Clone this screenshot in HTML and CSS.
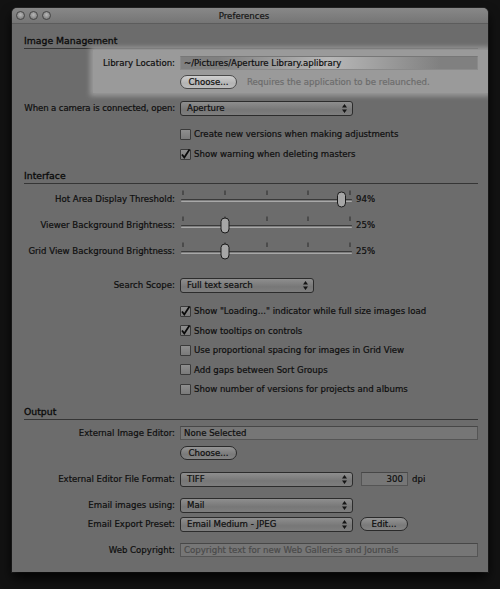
FILE: index.html
```html
<!DOCTYPE html>
<html>
<head>
<meta charset="utf-8">
<title>Preferences</title>
<link rel="stylesheet" href="styles.css">
</head>
<body>
<div class="window">
  <div class="titlebar">
    <div class="lights"><span class="light"></span><span class="light"></span><span class="light"></span></div>
    <div class="title">Preferences</div>
    <div></div>
  </div>
  <div class="content">
    <div class="section-head">Image Management</div>
    <div class="highlight">
      <div class="row r-lib"><span class="lbl">Library Location:</span><div class="field light">~/Pictures/Aperture Library.aplibrary</div></div>
      <div class="row r-choose"><span class="lbl"></span><button class="btn choose">Choose...</button><span class="note">Requires the application to be relaunched.</span></div>
    </div>
    <div class="row r-camera"><span class="lbl tight">When a camera is connected, open:</span>
      <div class="popup"><span>Aperture</span><svg class="arrows" width="5" height="9" viewBox="0 0 5 9"><path d="M0 3.5L2.5 0L5 3.5Z M0 5.5L2.5 9L5 5.5Z"/></svg></div>
    </div>
    <div class="row indent r-cb1"><span class="cb"></span><span>Create new versions when making adjustments</span></div>
    <div class="row indent r-cb2"><span class="cb"><svg width="11" height="11" viewBox="0 0 11 11"><path d="M2 5.5L4.3 8.5L9.5 0.5" fill="none" stroke="#0a0a0a" stroke-width="1.8"/></svg></span><span>Show warning when deleting masters</span></div>

    <div class="section-head h-interface">Interface</div>
    <div class="row slider-row s-first"><span class="lbl">Hot Area Display Threshold:</span>
      <svg class="slider" width="174" height="26" viewBox="0 0 174 26">
        <g class="ticks"><rect x="2.5" y="4.5" width="1" height="4.5"/><rect x="44.5" y="4.5" width="1" height="4.5"/><rect x="86.5" y="4.5" width="1" height="4.5"/><rect x="127.5" y="4.5" width="1" height="4.5"/><rect x="169.5" y="4.5" width="1" height="4.5"/></g>
        <rect class="track-dark" x="1" y="13" width="171" height="1.5" rx="0.75"/><rect class="track-light" x="1" y="14.5" width="171" height="1.5" rx="0.75"/>
        <path class="knob" d="M157.5 9.5 Q157.5 6 161.5 6 Q165.5 6 165.5 9.5 L165.5 17 Q165.5 21 161.5 21 Q157.5 21 157.5 17 Z"/>
      </svg><span class="val">94%</span>
    </div>
    <div class="row slider-row"><span class="lbl">Viewer Background Brightness:</span>
      <svg class="slider" width="174" height="26" viewBox="0 0 174 26">
        <g class="ticks"><rect x="2.5" y="4.5" width="1" height="4.5"/><rect x="44.5" y="4.5" width="1" height="4.5"/><rect x="86.5" y="4.5" width="1" height="4.5"/><rect x="127.5" y="4.5" width="1" height="4.5"/><rect x="169.5" y="4.5" width="1" height="4.5"/></g>
        <rect class="track-dark" x="1" y="13" width="171" height="1.5" rx="0.75"/><rect class="track-light" x="1" y="14.5" width="171" height="1.5" rx="0.75"/>
        <path class="knob" d="M41 9.5 Q41 6 45 6 Q49 6 49 9.5 L49 17 Q49 21 45 21 Q41 21 41 17 Z"/>
      </svg><span class="val">25%</span>
    </div>
    <div class="row slider-row"><span class="lbl">Grid View Background Brightness:</span>
      <svg class="slider" width="174" height="26" viewBox="0 0 174 26">
        <g class="ticks"><rect x="2.5" y="4.5" width="1" height="4.5"/><rect x="44.5" y="4.5" width="1" height="4.5"/><rect x="86.5" y="4.5" width="1" height="4.5"/><rect x="127.5" y="4.5" width="1" height="4.5"/><rect x="169.5" y="4.5" width="1" height="4.5"/></g>
        <rect class="track-dark" x="1" y="13" width="171" height="1.5" rx="0.75"/><rect class="track-light" x="1" y="14.5" width="171" height="1.5" rx="0.75"/>
        <path class="knob" d="M41 9.5 Q41 6 45 6 Q49 6 49 9.5 L49 17 Q49 21 45 21 Q41 21 41 17 Z"/>
      </svg><span class="val">25%</span>
    </div>
    <div class="row r-scope"><span class="lbl">Search Scope:</span>
      <div class="popup narrow"><span>Full text search</span><svg class="arrows" width="5" height="9" viewBox="0 0 5 9"><path d="M0 3.5L2.5 0L5 3.5Z M0 5.5L2.5 9L5 5.5Z"/></svg></div>
    </div>
    <div class="cb-list">
      <div class="row indent cbrow"><span class="cb"><svg width="11" height="11" viewBox="0 0 11 11"><path d="M2 5.5L4.3 8.5L9.5 0.5" fill="none" stroke="#0a0a0a" stroke-width="1.8"/></svg></span><span>Show "Loading..." indicator while full size images load</span></div>
      <div class="row indent cbrow"><span class="cb"><svg width="11" height="11" viewBox="0 0 11 11"><path d="M2 5.5L4.3 8.5L9.5 0.5" fill="none" stroke="#0a0a0a" stroke-width="1.8"/></svg></span><span>Show tooltips on controls</span></div>
      <div class="row indent cbrow"><span class="cb"></span><span>Use proportional spacing for images in Grid View</span></div>
      <div class="row indent cbrow"><span class="cb"></span><span>Add gaps between Sort Groups</span></div>
      <div class="row indent cbrow"><span class="cb"></span><span>Show number of versions for projects and albums</span></div>
    </div>

    <div class="section-head h-output">Output</div>
    <div class="row r-ext"><span class="lbl">External Image Editor:</span><div class="field">None Selected</div></div>
    <div class="row r-choose2"><span class="lbl"></span><button class="btn choose">Choose...</button></div>
    <div class="row r-format"><span class="lbl">External Editor File Format:</span>
      <div class="popup"><span>TIFF</span><svg class="arrows" width="5" height="9" viewBox="0 0 5 9"><path d="M0 3.5L2.5 0L5 3.5Z M0 5.5L2.5 9L5 5.5Z"/></svg></div>
      <div class="field dpi">300</div><span class="unit">dpi</span>
    </div>
    <div class="row r-mail"><span class="lbl">Email images using:</span>
      <div class="popup"><span>Mail</span><svg class="arrows" width="5" height="9" viewBox="0 0 5 9"><path d="M0 3.5L2.5 0L5 3.5Z M0 5.5L2.5 9L5 5.5Z"/></svg></div>
    </div>
    <div class="row r-preset"><span class="lbl">Email Export Preset:</span>
      <div class="popup"><span>Email Medium - JPEG</span><svg class="arrows" width="5" height="9" viewBox="0 0 5 9"><path d="M0 3.5L2.5 0L5 3.5Z M0 5.5L2.5 9L5 5.5Z"/></svg></div>
      <button class="btn edit">Edit...</button>
    </div>
    <div class="row r-web"><span class="lbl">Web Copyright:</span><div class="field placeholder">Copyright text for new Web Galleries and Journals</div></div>
  </div>
</div>
</body>
</html>
```

FILE: styles.css
```css
* { box-sizing: border-box; }
html, body { margin: 0; padding: 0; }
body {
  background: #121212;
  width: 500px;
  height: 589px;
  overflow: hidden;
  font-family: "DejaVu Sans", sans-serif;
  font-size: 8.6px;
  color: #0e0e0e;
  -webkit-text-stroke: 0.2px currentColor;
}
.window {
  margin: 8px 0 0 12px;
  width: 476px;
  height: 564px;
  background: #6c6c6c;
  border-radius: 5px 5px 0 0;
  box-shadow: 0 6px 12px rgba(0,0,0,0.85), 0 0 0 1px #262626;
  overflow: hidden;
  display: flex;
  flex-direction: column;
}
.titlebar {
  height: 16px;
  flex: none;
  background: linear-gradient(#888, #757575);
  border-bottom: 1px solid #5c5c5c;
  display: grid;
  grid-template-columns: 1fr auto 1fr;
  align-items: center;
}
.lights { display: flex; gap: 4px; padding-left: 4px; }
.light {
  width: 9px; height: 9px; border-radius: 50%;
  border: 1px solid #454545;
  background: radial-gradient(circle at 50% 40%, #b8b8b8, #808080 75%);
}
.title { margin-right: 12px; color: #151515; }
.content {
  padding: 10px 10px 0 12px;
  display: flex;
  flex-direction: column;
}
.section-head {
  height: 15px;
  flex: none;
  border-bottom: 1px solid #353535;
  font-size: 9.3px;
  line-height: 14px;
  color: #0a0a0a;
  -webkit-text-stroke: 0.3px currentColor;
}
.row { display: flex; align-items: center; flex: none; white-space: nowrap; }
.lbl {
  width: 151px; flex: none; margin-right: 5px; white-space: nowrap;
  text-align: right;
}
.lbl.tight { letter-spacing: -0.13px; }
.indent { padding-left: 156px; }

.highlight {
  margin: 1px -10px 0 69px;
  padding: 6px 0 4px 0;
  background: #9a9a9a;
  box-shadow: 0 0 5px 3px #9a9a9a;
}
.highlight .lbl { width: 82px; }
.r-lib { height: 14px; }
.r-choose { height: 14px; margin-top: 5px; }

.field {
  flex: none;
  display: block;
  height: 14px;
  width: 298px;
  background-color: #767676;
  border: 1px solid #555;
  border-top-color: #474747;
  border-radius: 0;
  padding: 0 3px;
  line-height: 12px;
  white-space: nowrap;
  overflow: hidden;
}
.field.light { background-color: #c0c0c0; border-color: #8a8a8a; border-top-color: #777; }
.field.placeholder { color: #4a4a4a; }
.field.dpi { width: 47px; margin-left: 8px; text-align: right; padding-right: 4px; }
.unit { margin-left: 4px; }

.btn {
  flex: none;
  font: inherit;
  color: #0e0e0e;
  height: 14px;
  padding: 0;
  border: 1px solid #2a2a2a;
  border-radius: 7px;
  background: linear-gradient(#959595, #7a7a7a 60%, #838383);
  line-height: 12px;
}
.btn.choose { width: 57px; }
.btn.edit { width: 48px; margin-left: 7px; }
.highlight .btn { background: linear-gradient(#d0d0d0, #b4b4b4 60%, #bdbdbd); border-color: #4a4a4a; }
.note { margin-left: 10px; color: #6c6c6c; }

.popup {
  flex: none;
  width: 173px;
  height: 15px;
  border: 1px solid #2c2c2c;
  border-radius: 3px;
  background: linear-gradient(#8e8e8e, #777 60%, #7e7e7e);
  padding: 0 5px 0 6px;
  display: flex;
  align-items: center;
  justify-content: space-between;
  white-space: nowrap;
}
.popup.narrow { width: 134px; }
.arrows { fill: #151515; flex: none; }

.cb {
  width: 11px; height: 11px; flex: none;
  border: 1px solid #3a3a3a;
  border-radius: 1px;
  background: linear-gradient(#8e8e8e, #7a7a7a);
  margin-right: 3px;
}
.cb svg { display: block; margin: -1px 0 0 -1px; }

.r-camera { height: 16px; margin-top: 7px; }
.r-cb1 { height: 14px; margin-top: 11px; }
.r-cb2 { height: 14px; margin-top: 6px; }
.h-interface { margin-top: 8px; }
.slider-row { height: 26px; }
.s-first { margin-top: 2px; }
.slider { flex: none; display: block; }
.ticks rect { fill: #2a2a2a; }
.track-dark { fill: #3a3a3a; }
.track-light { fill: #a8a8a8; }
.knob { fill: #a6a6a6; stroke: #1a1a1a; stroke-width: 1; }
.val { margin-left: 2px; }
.r-scope { height: 16px; margin-top: 13px; }
.cb-list { margin-top: 8.5px; display: flex; flex-direction: column; }
.cbrow { height: 19.5px; }
.h-output { margin-top: 6px; }
.r-ext { height: 14px; margin-top: 6px; }
.r-choose2 { height: 14px; margin-top: 6px; }
.r-format { height: 16px; margin-top: 11px; }
.r-mail { height: 16px; margin-top: 10px; }
.r-preset { height: 16px; margin-top: 3px; }
.r-web { height: 14px; margin-top: 11px; }
```
